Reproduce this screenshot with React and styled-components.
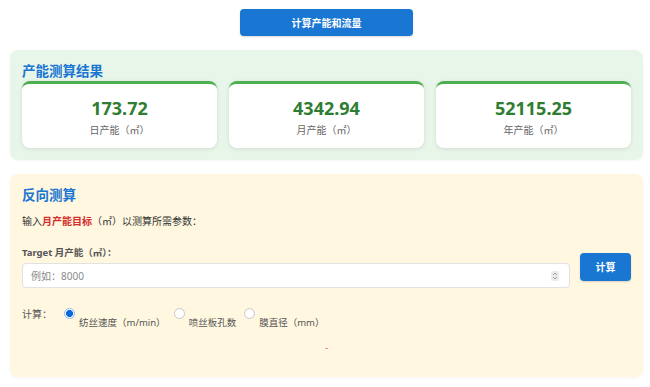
import React from "react";
import styled, { createGlobalStyle } from "styled-components";

const Global = createGlobalStyle`
  html, body { margin: 0; padding: 0; background: #ffffff; }
  body {
    font-family: "Noto Sans", "Noto Sans CJK SC", sans-serif;
    color: #333;
  }
  * { box-sizing: border-box; }
`;

const Page = styled.div`
  padding: 9px 7px 9px 10px;
  display: flex;
  flex-direction: column;
  gap: 14px;
`;

const TopBar = styled.div`
  display: flex;
  justify-content: center;
`;

const PrimaryButton = styled.button`
  font-family: "Noto Sans", "Noto Sans CJK SC", sans-serif;
  background: #1976d2;
  color: #fff;
  border: none;
  border-radius: 4px;
  font-weight: 700;
  font-size: ${(p) => p.$size || "10px"};
  height: ${(p) => p.$h || "27px"};
  width: ${(p) => p.$w || "auto"};
  padding: 0;
  cursor: pointer;
  box-shadow: 0 1px 2px rgba(0, 0, 0, 0.15);
`;

const Panel = styled.section`
  background: ${(p) => p.$bg};
  border-radius: 8px;
  padding: ${(p) => p.$pad || "12px"};
  box-shadow: 0 1px 3px rgba(0, 0, 0, 0.04);
`;

const PanelTitle = styled.h2`
  margin: 0 0 ${(p) => p.$mb || "0"};
  font-size: 13.5px;
  line-height: 19px;
  font-weight: 700;
  color: #1976d2;
`;

const Cards = styled.div`
  display: grid;
  grid-template-columns: repeat(3, 1fr);
  gap: 12px;
`;

const Card = styled.div`
  background: #fff;
  border-radius: 8px;
  border-top: 3px solid #4caf50;
  box-shadow: 0 1px 4px rgba(0, 0, 0, 0.1);
  padding: 12px 8px 10px;
  text-align: center;
`;

const CardValue = styled.div`
  font-size: 18px;
  line-height: 24px;
  font-weight: 700;
  color: #2e7d32;
`;

const CardLabel = styled.div`
  margin-top: 2px;
  font-size: 10px;
  line-height: 16px;
  color: #666;
`;

const Intro = styled.p`
  margin: 0;
  font-size: 10px;
  line-height: 16px;
  color: #333;
`;

const Strong = styled.strong`
  color: #d32f2f;
  font-weight: 700;
`;

const FormRow = styled.div`
  margin-top: 16px;
  display: flex;
  align-items: center;
  gap: 10px;
`;

const Field = styled.div`
  flex: 1;
  display: flex;
  flex-direction: column;
`;

const FieldLabel = styled.label`
  font-size: 9.5px;
  line-height: 16px;
  font-weight: 700;
  color: #555;
  margin-bottom: 2px;
`;

const InputBox = styled.div`
  height: 25px;
  background: #fff;
  border: 1px solid #e2e2e2;
  border-radius: 4px;
  display: flex;
  align-items: center;
  padding: 0 10px 0 8px;
`;

const TextInput = styled.input`
  flex: 1;
  border: none;
  outline: none;
  background: transparent;
  font-family: "Noto Sans", "Noto Sans CJK SC", sans-serif;
  font-size: 10px;
  color: #333;
  padding: 0;
  &::placeholder { color: #8a8a8a; }
`;

const Spinner = styled.div`
  width: 8px;
  height: 10px;
  background: #ececec;
  border-radius: 1px;
  display: flex;
  align-items: center;
  justify-content: center;
`;

const RadioRow = styled.div`
  margin-top: 18px;
  display: flex;
  align-items: flex-start;
  font-size: 10px;
  line-height: 16px;
  color: #555;
`;

const RowLabel = styled.span`
  margin-right: 7px;
`;

const Option = styled.label`
  display: flex;
  align-items: flex-start;
  margin-right: 3px;
`;

const Radio = styled.input`
  appearance: none;
  -webkit-appearance: none;
  width: 11px;
  height: 11px;
  margin: 2px 4px 0 5px;
  border: 1px solid #c8c8c8;
  border-radius: 50%;
  background: #fff;
  flex-shrink: 0;
  &:checked {
    border-color: #8ab8f0;
    background: radial-gradient(circle, #0a68de 0 3.2px, #ffffff 3.8px);
  }
`;

const OptionText = styled.span`
  margin-top: 9px;
  font-size: 9.5px;
  color: #555;
`;

const Result = styled.div`
  margin-top: 8px;
  height: 16px;
  text-align: center;
  font-size: 10px;
  line-height: 16px;
  color: #e57373;
`;

const cards = [
  { value: "173.72", label: "日产能（㎡）" },
  { value: "4342.94", label: "月产能（㎡）" },
  { value: "52115.25", label: "年产能（㎡）" },
];

export default function App() {
  return (
    <>
      <Global />
      <Page>
        <TopBar>
          <PrimaryButton $w="173px">计算产能和流量</PrimaryButton>
        </TopBar>

        <Panel $bg="#e8f5e9">
          <PanelTitle>产能测算结果</PanelTitle>
          <Cards>
            {cards.map((c) => (
              <Card key={c.value}>
                <CardValue>{c.value}</CardValue>
                <CardLabel>{c.label}</CardLabel>
              </Card>
            ))}
          </Cards>
        </Panel>

        <Panel $bg="#fff7e0" $pad="12px 12px 22px">
          <PanelTitle $mb="8px">反向测算</PanelTitle>
          <Intro>
            输入<Strong>月产能目标</Strong>（㎡）以测算所需参数：
          </Intro>
          <FormRow>
            <Field>
              <FieldLabel>Target 月产能（㎡）：</FieldLabel>
              <InputBox>
                <TextInput placeholder="例如：8000" />
                <Spinner>
                  <svg width="6" height="8" viewBox="0 0 6 8">
                    <path d="M1 3 L3 1 L5 3 M1 5 L3 7 L5 5" fill="none" stroke="#888" strokeWidth="0.8" />
                  </svg>
                </Spinner>
              </InputBox>
            </Field>
            <PrimaryButton $w="51px" $h="28px">计算</PrimaryButton>
          </FormRow>
          <RadioRow>
            <RowLabel>计算：</RowLabel>
            <Option>
              <Radio type="radio" name="calc" defaultChecked />
              <OptionText>纺丝速度（m/min）</OptionText>
            </Option>
            <Option>
              <Radio type="radio" name="calc" />
              <OptionText>喷丝板孔数</OptionText>
            </Option>
            <Option>
              <Radio type="radio" name="calc" />
              <OptionText>膜直径（mm）</OptionText>
            </Option>
          </RadioRow>
          <Result>-</Result>
        </Panel>
      </Page>
    </>
  );
}
